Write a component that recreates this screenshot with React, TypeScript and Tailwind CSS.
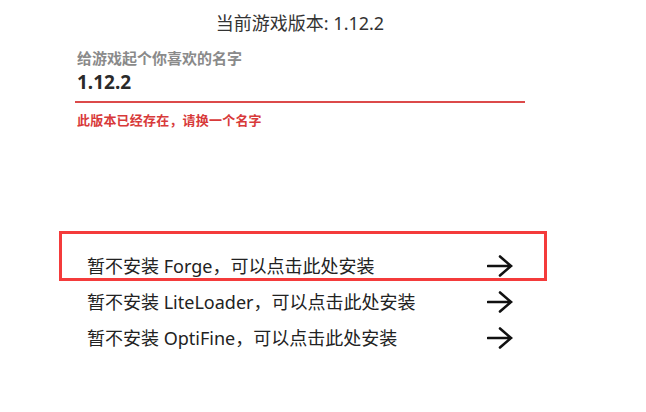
import React from "react";

const FONT = '"Noto Sans", "Noto Sans CJK SC", sans-serif';

function Arrow() {
  return (
    <svg width="26" height="22" viewBox="0 0 26 22" fill="none">
      <path
        d="M1 11H24M13 1.5L24 11L13 20.5"
        stroke="#111"
        strokeWidth="2.6"
        strokeLinecap="round"
        strokeLinejoin="miter"
      />
    </svg>
  );
}

const installers = ["Forge", "LiteLoader", "OptiFine"];

export default function App() {
  return (
    <div
      className="w-[646px] h-[412px] bg-white overflow-hidden"
      style={{ fontFamily: FONT }}
    >
      <div className="w-[600px]">
        <h1 className="pt-[11px] text-center text-[18px] leading-[24px] text-[#333]">
          当前游戏版本: 1.12.2
        </h1>

        <div className="ml-[75px] w-[450px] mt-[13px]">
          <div className="pl-[2px] text-[15px] leading-[20px] font-bold text-[#8a8a8a]">
            给游戏起个你喜欢的名字
          </div>
          <div className="pl-[2px] pb-[6px] mt-px text-[19px] leading-[26px] font-bold text-[#2a2a2a] border-b-2 border-[#dc4a4a]">
            1.12.2
          </div>
          <div className="pl-[2px] mt-[8px] text-[13px] leading-[18px] font-bold text-[#d83a3a] tracking-[0.2px]">
            此版本已经存在，请换一个名字
          </div>
        </div>
      </div>

      <div className="ml-[59px] w-[488px] mt-[102px]">
        {installers.map((name, i) =>
          i === 0 ? (
            <div
              key={name}
              className="border-[3px] border-[#f43b3b] pt-[20px] pl-[25px] pr-[31px]"
            >
              <div className="flex items-center justify-between h-[24px] text-[18px] text-[#222]">
                <span>暂不安装 {name}，可以点击此处安装</span>
                <Arrow />
              </div>
            </div>
          ) : (
            <div
              key={name}
              className={`flex items-center justify-between h-[36px] pl-[28px] pr-[34px] text-[18px] text-[#222] ${
                i === 1 ? "mt-[3px]" : ""
              }`}
            >
              <span>暂不安装 {name}，可以点击此处安装</span>
              <Arrow />
            </div>
          )
        )}
      </div>
    </div>
  );
}
